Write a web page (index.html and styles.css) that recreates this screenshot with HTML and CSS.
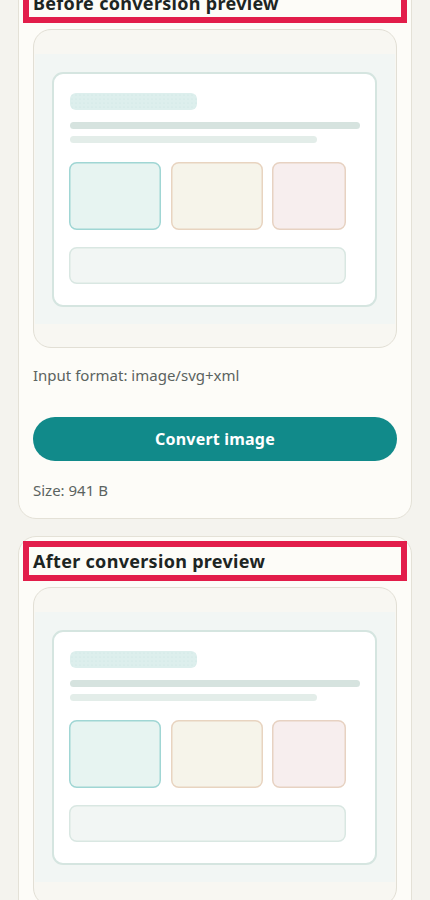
FILE: index.html
```html
<!DOCTYPE html>
<html>
<head>
  <title>Image Converter</title>
  <meta charset="UTF-8">
  <link rel="stylesheet" href="styles.css">
</head>
<body>
  <main class="page">
    <section class="panel">
      <h2 class="panel-title">Before conversion preview</h2>
      <div class="preview">
        <svg class="preview-img" width="360" height="270" viewBox="0 0 360 270">
          <defs>
            <pattern id="dotsA" width="4" height="4" patternUnits="userSpaceOnUse">
              <circle cx="1" cy="1" r="0.6" fill="#c9e4e1"/>
            </pattern>
          </defs>
          <rect width="360" height="270" fill="#f2f6f4"/>
          <rect x="18" y="19" width="323" height="233" rx="10" fill="#ffffff" stroke="#d5e5e0" stroke-width="2"/>
          <rect x="35" y="39" width="127" height="17" rx="6" fill="#ddefed"/>
          <rect x="35" y="39" width="127" height="17" rx="6" fill="url(#dotsA)"/>
          <rect x="35" y="68" width="290" height="7" rx="3.5" fill="#d6e3df"/>
          <rect x="35" y="82" width="247" height="7" rx="3.5" fill="#e3ede9"/>
          <rect x="34.75" y="108.75" width="90.5" height="66.5" rx="7" fill="#e7f4f1" stroke="#a0d6d4" stroke-width="1.5"/>
          <rect x="136.75" y="108.75" width="90.5" height="66.5" rx="7" fill="#f6f4ea" stroke="#e8d4c0" stroke-width="1.5"/>
          <rect x="237.75" y="108.75" width="72.5" height="66.5" rx="7" fill="#f7eeee" stroke="#e7d2c2" stroke-width="1.5"/>
          <rect x="34.75" y="193.75" width="275.5" height="35.5" rx="7" fill="#f2f6f4" stroke="#d9e7e2" stroke-width="1.5"/>
        </svg>
      </div>
      <p class="meta">Input format: image/svg+xml</p>
      <button class="convert-btn">Convert image</button>
      <p class="meta size">Size: 941 B</p>
    </section>

    <section class="panel">
      <h2 class="panel-title">After conversion preview</h2>
      <div class="preview">
        <svg class="preview-img" width="360" height="270" viewBox="0 0 360 270">
          <defs>
            <pattern id="dotsB" width="4" height="4" patternUnits="userSpaceOnUse">
              <circle cx="1" cy="1" r="0.6" fill="#c9e4e1"/>
            </pattern>
          </defs>
          <rect width="360" height="270" fill="#f2f6f4"/>
          <rect x="18" y="19" width="323" height="233" rx="10" fill="#ffffff" stroke="#d5e5e0" stroke-width="2"/>
          <rect x="35" y="39" width="127" height="17" rx="6" fill="#ddefed"/>
          <rect x="35" y="39" width="127" height="17" rx="6" fill="url(#dotsB)"/>
          <rect x="35" y="68" width="290" height="7" rx="3.5" fill="#d6e3df"/>
          <rect x="35" y="82" width="247" height="7" rx="3.5" fill="#e3ede9"/>
          <rect x="34.75" y="108.75" width="90.5" height="66.5" rx="7" fill="#e7f4f1" stroke="#a0d6d4" stroke-width="1.5"/>
          <rect x="136.75" y="108.75" width="90.5" height="66.5" rx="7" fill="#f6f4ea" stroke="#e8d4c0" stroke-width="1.5"/>
          <rect x="237.75" y="108.75" width="72.5" height="66.5" rx="7" fill="#f7eeee" stroke="#e7d2c2" stroke-width="1.5"/>
          <rect x="34.75" y="193.75" width="275.5" height="35.5" rx="7" fill="#f2f6f4" stroke="#d9e7e2" stroke-width="1.5"/>
        </svg>
      </div>
    </section>
  </main>
</body>
</html>
```

FILE: styles.css
```css
body {
  margin: 0;
  background-color: #f4f3ee;
  font-family: "Noto Sans", "Noto Sans CJK JP", sans-serif;
  color: #1d2523;
}
.page {
  display: flex;
  flex-direction: column;
  gap: 17px;
  padding: 0 18px;
  margin-top: -22px;
}
.panel {
  background-color: #fdfcf8;
  border: 1px solid #e4e1d7;
  border-radius: 18px;
  padding: 14px 14px 17px;
}
.panel-title {
  margin: 0;
  font-size: 18px;
  line-height: 20px;
  font-weight: 700;
  letter-spacing: 0.3px;
  color: #1d2523;
  outline: 6px solid #e21d4a;
  outline-offset: 4px;
}
.preview {
  margin-top: 16px;
  display: flex;
  justify-content: center;
  padding: 24px 1px 23px;
  background-color: #f8f7f2;
  border: 1px solid #e2dfd5;
  border-radius: 18px;
}
.preview-img {
  display: block;
}
.meta {
  margin: 16px 0 0;
  font-size: 15px;
  line-height: 22px;
  color: #5b6360;
}
.convert-btn {
  display: block;
  width: 100%;
  height: 44px;
  margin-top: 31px;
  padding: 0;
  background-color: #118a8a;
  color: white;
  border: none;
  border-radius: 22px;
  font-family: inherit;
  font-size: 16px;
  font-weight: 700;
  letter-spacing: 0.2px;
  cursor: pointer;
}
.meta.size {
  margin-top: 18px;
}
```
